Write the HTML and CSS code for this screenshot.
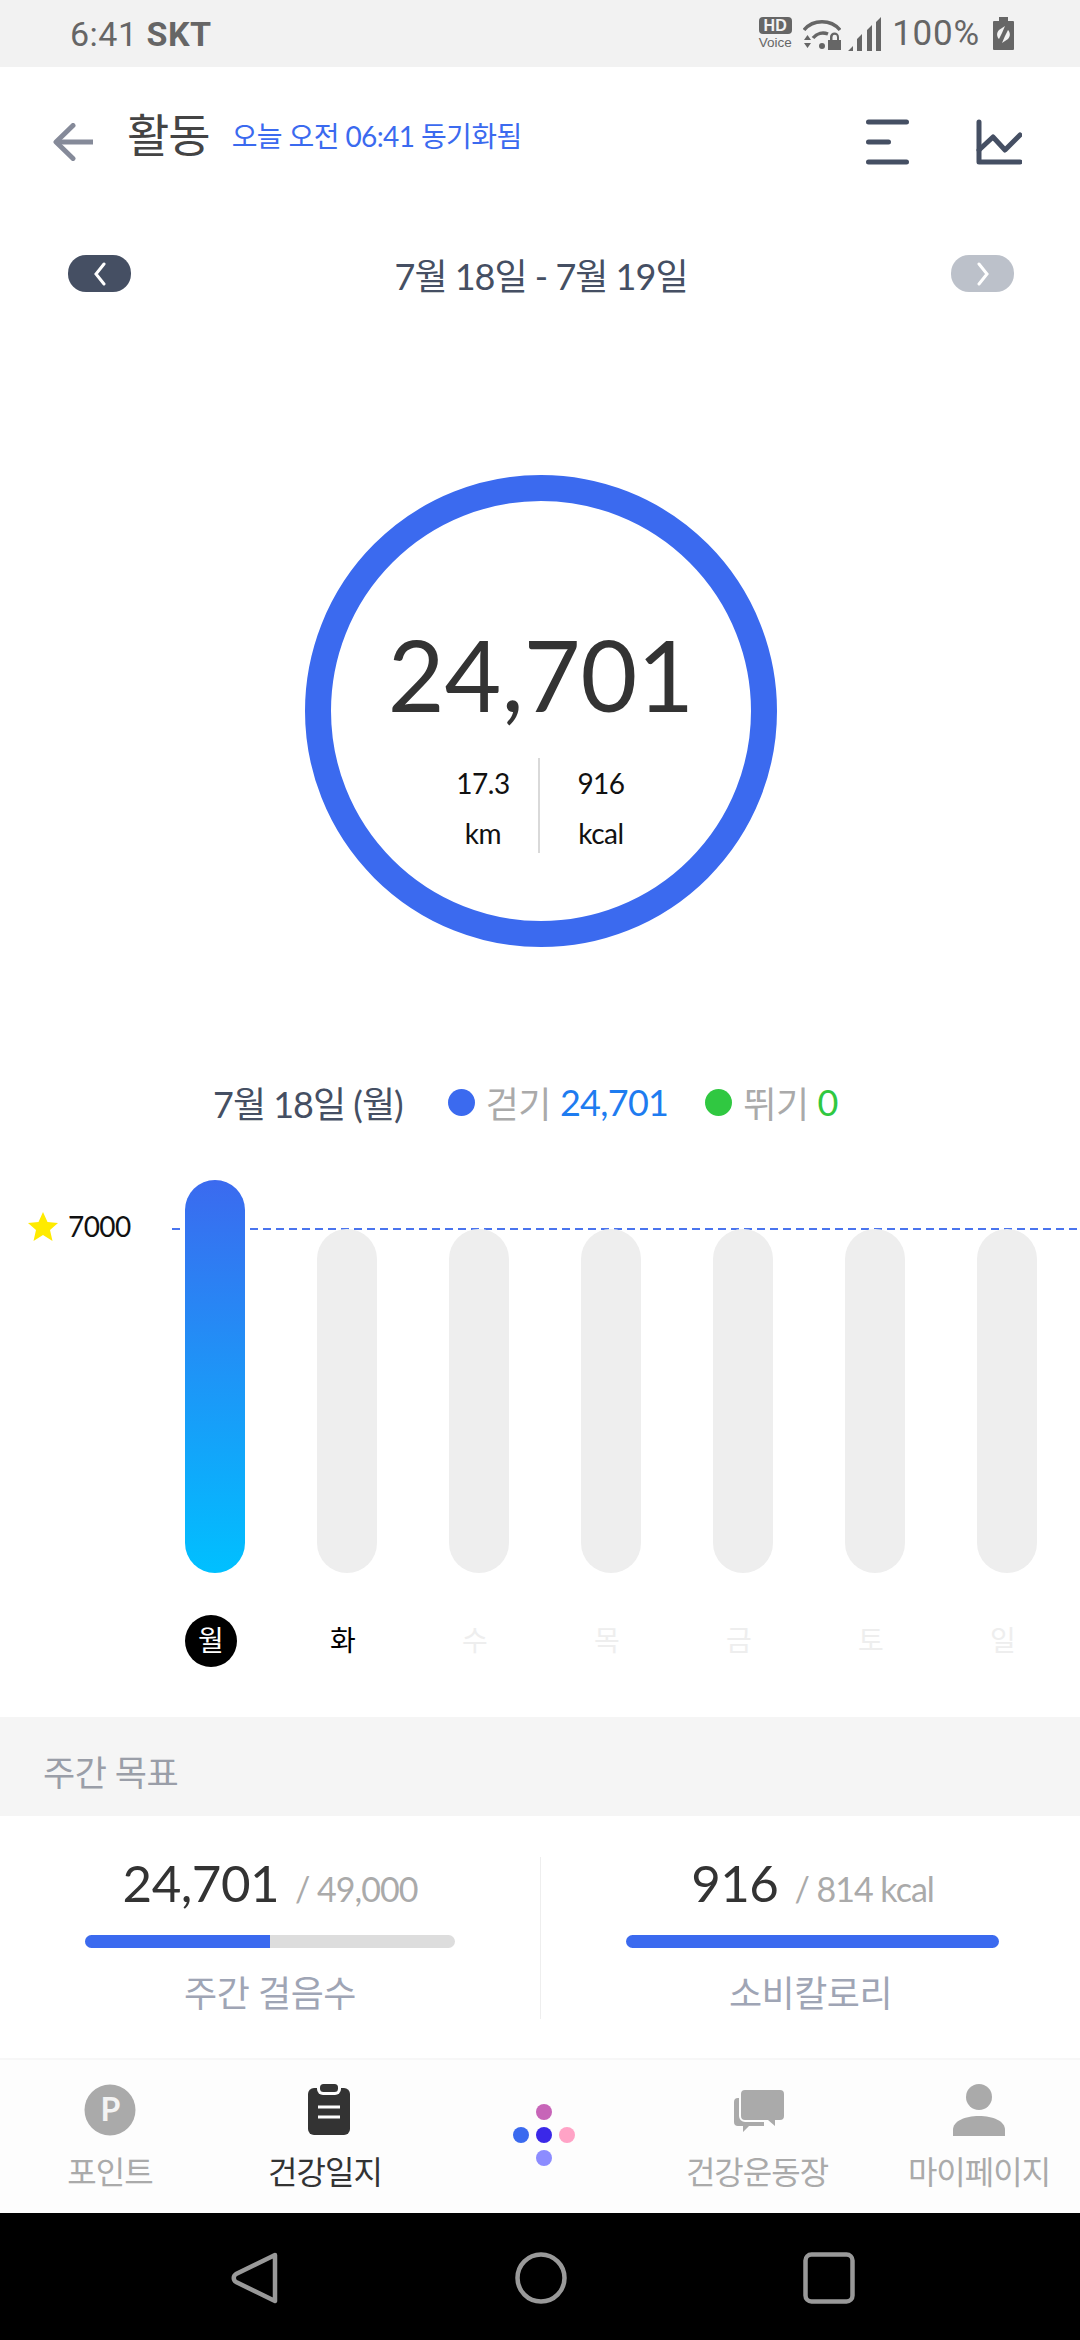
FILE: index.html
```html
<!DOCTYPE html>
<html lang="ko">
<head>
  <meta charset="UTF-8">
  <meta name="viewport" content="width=device-width, initial-scale=1">
  <title>활동</title>
  <link rel="stylesheet" href="styles.css">
</head>
<body>

<!-- status bar -->
<div class="status">
  <div class="status-time">6:41 <b>SKT</b></div>
  <div class="status-right">
    <div class="hd"><span class="hd-box">HD</span><span class="hd-voice">Voice</span></div>
    <svg class="ic-wifi" width="38" height="32" viewBox="0 0 38 32">
      <path d="M1 12C10 1 28 1 37 12" fill="none" stroke="#666" stroke-width="3.500"/>
      <path d="M10 20C14 15 20 14 25 16" fill="none" stroke="#666" stroke-width="3.500"/>
      <circle cx="19" cy="28" r="3" fill="#666"/>
      <path d="M1 22h7l-3.500-5zM1 25h7l-3.500 5z" fill="#666"/>
      <path d="M27 22v-3a4.500 4.500 0 0 1 9 0v3h2v10H25V22zM29.500 22h4.500v-3a2.200 2.200 0 0 0-4.500 0z" fill="#666" fill-rule="evenodd"/>
    </svg>
    <svg class="ic-signal" width="33" height="34" viewBox="0 0 33 34">
      <path d="M0 34l5-5v5zM9 34V22l5-5v17zM19 34V13l5-5v26zM28 34V5l5-5v34z" fill="#666"/>
    </svg>
    <div class="status-pct">100%</div>
    <svg class="ic-batt" width="21" height="33" viewBox="0 0 21 33">
      <path d="M1 4h5V0h9v4h5a1 1 0 0 1 1 1v27a1 1 0 0 1-1 1H1a1 1 0 0 1-1-1V5a1 1 0 0 1 1-1z" fill="#666"/>
      <path d="M12 9L6 13c-3 3-2 7 0 9l3-6zM9 26l6-4c3-3 2-7 0-9l-3 6z" fill="#f2f2f2"/>
    </svg>
  </div>
</div>

<!-- header -->
<div class="header">
  <svg class="back" width="42" height="38" viewBox="0 0 42 38">
    <path d="M20 2.500L3 19l17 16.500" fill="none" stroke="#858a99" stroke-width="5" stroke-linecap="round" stroke-linejoin="round"/>
    <path d="M3 19h37" fill="none" stroke="#858a99" stroke-width="5"/>
  </svg>
  <h1 class="title">활동</h1>
  <span class="sync">오늘 오전 06:41 동기화됨</span>
  <div class="header-icons">
    <svg width="43" height="46" viewBox="0 0 43 46">
      <path d="M2.500 3h38M2.500 23h20M2.500 43h38" fill="none" stroke="#454f63" stroke-width="5" stroke-linecap="round"/>
    </svg>
    <svg width="46" height="46" viewBox="0 0 46 46">
      <path d="M3 3v40h41" fill="none" stroke="#454f63" stroke-width="5" stroke-linecap="round" stroke-linejoin="round"/>
      <path d="M3 31L17 18l12 13 15-15" fill="none" stroke="#454f63" stroke-width="5" stroke-linecap="round" stroke-linejoin="round"/>
    </svg>
  </div>
</div>

<!-- date nav -->
<div class="datenav">
  <div class="navbtn navbtn-on">
    <svg width="14" height="24" viewBox="0 0 14 24"><path d="M11 2L3 12l8 10" fill="none" stroke="#fff" stroke-width="3" stroke-linecap="round"/></svg>
  </div>
  <div class="daterange">7월 18일 - 7월 19일</div>
  <div class="navbtn navbtn-off">
    <svg width="14" height="24" viewBox="0 0 14 24"><path d="M3 2l8 10-8 10" fill="none" stroke="#fff" stroke-width="3" stroke-linecap="round"/></svg>
  </div>
</div>

<!-- ring -->
<div class="ring">
  <div class="ring-num">24,701</div>
  <div class="ring-sub">
    <div class="ring-col">17.3<br>km</div>
    <div class="ring-col ring-col-r">916<br>kcal</div>
  </div>
</div>

<!-- legend -->
<div class="legend">
  <span class="legend-date">7월 18일 (월)</span>
  <i class="dot dot-blue"></i>
  <span class="legend-name">걷기</span>
  <span class="legend-val val-blue">24,701</span>
  <i class="dot dot-green"></i>
  <span class="legend-name">뛰기</span>
  <span class="legend-val val-green">0</span>
</div>

<!-- chart -->
<div class="chart">
  <div class="goalline"></div>
  <div class="goalmark">
    <svg width="30" height="29" viewBox="0 0 30 29"><path d="M15 0l4.500 10L30 11l-8 7 2.500 11L15 23l-9.500 6L8 18l-8-7 10.500-1z" fill="#ffeb00"/></svg>
    <span>7000</span>
  </div>
  <div class="bars">
    <div class="bar bar-on"></div>
    <div class="bar"></div>
    <div class="bar"></div>
    <div class="bar"></div>
    <div class="bar"></div>
    <div class="bar"></div>
    <div class="bar"></div>
  </div>
</div>

<div class="days">
  <div class="day day-on">월</div>
  <div class="day day-now">화</div>
  <div class="day">수</div>
  <div class="day">목</div>
  <div class="day">금</div>
  <div class="day">토</div>
  <div class="day">일</div>
</div>

<!-- weekly goal -->
<div class="section-head">주간 목표</div>
<div class="goals">
  <div class="goal goal-l">
    <div class="goal-nums"><span class="goal-big">24,701</span><span class="goal-small">/ 49,000</span></div>
    <div class="track track-l"><div class="fill" style="width:50%"></div></div>
    <div class="goal-label">주간 걸음수</div>
  </div>
  <div class="goal goal-r">
    <div class="goal-nums"><span class="goal-big">916</span><span class="goal-small">/ 814 kcal</span></div>
    <div class="track track-r"><div class="fill" style="width:100%"></div></div>
    <div class="goal-label">소비칼로리</div>
  </div>
</div>

<!-- tab bar -->
<div class="tabs">
  <div class="tab tab-1">
    <svg width="52" height="52" viewBox="0 0 52 52">
      <circle cx="26" cy="26" r="25.500" fill="#aaa"/>
      <text class="tab-p" x="26" y="37" text-anchor="middle">P</text>
    </svg>
    <span>포인트</span>
  </div>
  <div class="tab tab-2 tab-on">
    <svg class="ic-clip" width="44" height="52" viewBox="0 0 44 52">
      <rect x="1" y="4" width="42" height="47" rx="6" fill="#333"/>
      <rect x="10" y="-3" width="24" height="14" rx="6" fill="#fdfdfd"/>
      <rect x="13" y="0" width="18" height="8" rx="3.500" fill="#333"/>
      <path d="M11 23h22M11 33h22" stroke="#fdfdfd" stroke-width="3"/>
    </svg>
    <span>건강일지</span>
  </div>
  <div class="tab-logo">
    <div class="logo-row"><i class="ldot l1"></i></div>
    <div class="logo-row"><i class="ldot l2"></i><i class="ldot l3"></i><i class="ldot l4"></i></div>
    <div class="logo-row"><i class="ldot l5"></i></div>
  </div>
  <div class="tab tab-3">
    <svg class="ic-chat" width="52" height="52" viewBox="0 -6 52 52">
      <path d="M4 8h26v28H15l-6 6v-6H4a4 4 0 0 1-4-4V12a4 4 0 0 1 4-4z" fill="#aaa"/>
      <path d="M11 0h35a4 4 0 0 1 4 4v22a4 4 0 0 1-4 4h-5v6l-7-6H11a4 4 0 0 1-4-4V4a4 4 0 0 1 4-4z" fill="#aaa" stroke="#fdfdfd" stroke-width="4" paint-order="stroke"/>
    </svg>
    <span>건강운동장</span>
  </div>
  <div class="tab tab-4">
    <svg width="52" height="52" viewBox="0 0 52 52">
      <circle cx="26" cy="13" r="13" fill="#aaa"/>
      <path d="M0 52V46C0 37 12 32 26 32s26 5 26 14v6z" fill="#aaa"/>
    </svg>
    <span>마이페이지</span>
  </div>
</div>

<!-- system nav -->
<div class="sysnav">
  <svg width="48" height="54" viewBox="0 0 48 54"><path d="M44 4L5 23c-3 2-3 6 0 8l39 19z" fill="none" stroke="#999" stroke-width="4.500" stroke-linejoin="round"/></svg>
  <svg width="52" height="52" viewBox="0 0 52 52"><circle cx="26" cy="26" r="23.500" fill="none" stroke="#999" stroke-width="4.500"/></svg>
  <svg width="52" height="52" viewBox="0 0 52 52"><rect x="2.500" y="2.500" width="47" height="47" rx="6" fill="none" stroke="#999" stroke-width="4.500"/></svg>
</div>

</body>
</html>
```

FILE: styles.css
```css
* {
  box-sizing: border-box;
}

body {
  margin: 0;
  width: 1080px;
  height: 2340px;
  overflow: hidden;
  background: white;
  font-family: Lato, "Noto Sans CJK KR", sans-serif;
  color: #333;
  display: flex;
  flex-direction: column;
}

.status {
  height: 67px;
  flex: none;
  background: #f2f2f2;
  display: flex;
  align-items: center;
  justify-content: space-between;
  padding: 0 66px 0 70px;
  color: #666;
  font-family: Roboto, sans-serif;
}

.status-time {
  font-size: 34px;
  letter-spacing: 0.5px;
}

.status-right {
  display: flex;
  align-items: center;
}

.hd {
  width: 34px;
  display: flex;
  flex-direction: column;
  align-items: center;
  font-family: "Liberation Sans", sans-serif;
}

.hd-box {
  width: 33px;
  height: 17px;
  background: #666;
  color: #f2f2f2;
  border-radius: 4px;
  font-size: 16px;
  font-weight: bold;
  line-height: 17px;
  text-align: center;
}

.hd-voice {
  font-size: 13.500px;
  line-height: 17px;
}

.ic-wifi {
  margin-left: 11px;
}

.ic-signal {
  margin-left: 7px;
}

.status-pct {
  margin-left: 11px;
  font-size: 35px;
  letter-spacing: 0.8px;
}

.ic-batt {
  margin-left: 13px;
}

.header {
  height: 119px;
  flex: none;
  display: flex;
  align-items: center;
  padding: 30px 58px 0 53px;
}

.title {
  margin: 0 0 0 32px;
  font-size: 46px;
  font-weight: 400;
  line-height: 60px;
  letter-spacing: -1px;
  color: #444;
  position: relative;
  top: -7px;
}

.sync {
  margin-left: 22px;
  font-size: 28px;
  letter-spacing: -0.6px;
  color: #3b6aef;
  position: relative;
  top: -7px;
}

.header-icons {
  margin-left: auto;
  display: flex;
  gap: 67px;
  align-items: center;
}

.datenav {
  margin-top: 69px;
  height: 37px;
  flex: none;
  display: flex;
  align-items: center;
  justify-content: space-between;
  padding: 0 66px 0 68px;
}

.navbtn {
  width: 63px;
  height: 37px;
  border-radius: 18px;
  display: flex;
  align-items: center;
  justify-content: center;
}

.navbtn-on {
  background: #454f63;
}

.navbtn-off {
  background: #bcc1ca;
}

.daterange {
  font-size: 36px;
  letter-spacing: -1px;
  color: #454f63;
}

.ring {
  margin: 183px 0 0 305px;
  width: 472px;
  height: 472px;
  flex: none;
  border: 26px solid #3b6aef;
  border-radius: 50%;
  display: flex;
  flex-direction: column;
  align-items: center;
  padding-top: 114px;
}

.ring-num {
  font-size: 98px;
  line-height: 118px;
  color: #333;
}

.ring-sub {
  margin: 25px 0 0 8px;
  display: flex;
}

.ring-col {
  width: 110px;
  height: 95px;
  font-size: 28px;
  line-height: 50px;
  letter-spacing: -0.5px;
  color: #111;
  text-align: center;
}

.ring-col-r {
  width: 124px;
  border-left: 2px solid #d9d9d9;
}

.legend {
  margin-top: 133px;
  height: 44px;
  flex: none;
  display: flex;
  align-items: center;
  padding-left: 213px;
  font-size: 36px;
}

.legend-date {
  letter-spacing: -1px;
  color: #454f63;
}

.dot {
  width: 27px;
  height: 27px;
  border-radius: 50%;
}

.dot-blue {
  background: #3b6aef;
  margin-left: 45px;
}

.dot-green {
  background: #30c841;
  margin-left: 37px;
}

.legend-name {
  margin-left: 11px;
  letter-spacing: -0.5px;
  color: #aaa;
}

.legend-val {
  margin-left: 9px;
  letter-spacing: -0.7px;
}

.val-blue {
  color: #1e7cf0;
}

.val-green {
  color: #30c841;
}

.chart {
  margin-top: 56px;
  height: 393px;
  flex: none;
  position: relative;
}

.goalline {
  position: absolute;
  left: 172px;
  right: 0;
  top: 48px;
  height: 2px;
  background: repeating-linear-gradient(to right, #4a74ee 0 8px, transparent 8px 13px);
}

.goalmark {
  position: absolute;
  left: 28px;
  top: 29px;
  display: flex;
  align-items: center;
  gap: 10px;
  font-size: 28px;
  letter-spacing: -0.6px;
  color: #111;
}

.bars {
  position: relative;
  height: 393px;
  display: flex;
  align-items: flex-end;
  gap: 72px;
  padding-left: 185px;
}

.bar {
  width: 60px;
  height: 344px;
  border-radius: 30px;
  background: #eee;
}

.bar-on {
  height: 393px;
  background: linear-gradient(to bottom, #3b6aef, #00c0ff);
}

.days {
  margin-top: 42px;
  height: 52px;
  flex: none;
  display: flex;
  gap: 80px;
  padding-left: 185px;
}

.day {
  width: 52px;
  height: 52px;
  border-radius: 50%;
  font-size: 28px;
  line-height: 50px;
  text-align: center;
  color: #eee;
}

.day-on {
  background: black;
  color: white;
}

.day-now {
  color: black;
}

.section-head {
  margin-top: 50px;
  height: 99px;
  flex: none;
  background: #f5f5f5;
  padding-left: 43px;
  font-size: 35px;
  line-height: 110px;
  letter-spacing: -0.5px;
  color: #9a9ea8;
}

.goals {
  height: 242px;
  flex: none;
  display: flex;
  padding-top: 41px;
}

.goal {
  width: 540px;
  height: 162px;
  display: flex;
  flex-direction: column;
  align-items: center;
}

.goal-r {
  border-left: 1px solid #eee;
}

.goal-nums {
  height: 66px;
  display: flex;
  align-items: baseline;
  gap: 16px;
}

.goal-r .goal-nums {
  margin-left: 4px;
}

.goal-big {
  font-size: 51px;
  line-height: 52px;
  letter-spacing: -0.5px;
  color: #333;
}

.goal-small {
  font-size: 34px;
  letter-spacing: -1px;
  color: #aaa;
}

.track {
  margin-top: 12px;
  height: 13px;
  background: #ddd;
  border-radius: 7px;
  overflow: hidden;
}

.track-l {
  width: 370px;
}

.track-r {
  width: 373px;
  margin-left: 4px;
}

.fill {
  height: 100%;
  background: #3b6aef;
}

.goal-label {
  margin-top: 20px;
  font-size: 36px;
  line-height: 50px;
  letter-spacing: -0.5px;
  color: #9fa5b5;
}

.tabs {
  height: 155px;
  flex: none;
  background: #fdfdfd;
  border-top: 2px solid #f7f7f7;
  position: relative;
}

.tab {
  position: absolute;
  top: 24px;
  width: 180px;
  height: 120px;
  display: flex;
  flex-direction: column;
  align-items: center;
  font-size: 32px;
  letter-spacing: -1px;
  color: #aaa;
}

.tab svg {
  height: 52px;
  flex: none;
}

.tab span {
  margin-top: 14px;
  line-height: 44px;
}

.tab-p {
  font-size: 32px;
  font-weight: 700;
  fill: #f4f4f4;
}

.ic-clip {
  margin-left: 8px;
}

.ic-chat {
  margin-left: 6px;
}

.tab-1 {
  left: 20px;
}

.tab-2 {
  left: 235px;
}

.tab-3 {
  left: 667px;
}

.tab-4 {
  left: 889px;
}

.tab-on {
  color: #333;
}

.tab-logo {
  position: absolute;
  left: 512px;
  top: 44px;
  width: 63px;
  display: flex;
  flex-direction: column;
  gap: 7px;
}

.logo-row {
  display: flex;
  justify-content: center;
  gap: 7px;
}

.ldot {
  width: 16px;
  height: 16px;
  border-radius: 50%;
}

.l1 {
  background: #c765b8;
}

.l2 {
  background: #3b6aef;
}

.l3 {
  background: #3a28e8;
}

.l4 {
  background: #ffa3c6;
}

.l5 {
  background: #8c8cff;
}

.sysnav {
  flex: 1;
  background: black;
  display: flex;
  align-items: center;
  justify-content: center;
  gap: 236px;
  padding: 2px 0 0 6px;
}
```
